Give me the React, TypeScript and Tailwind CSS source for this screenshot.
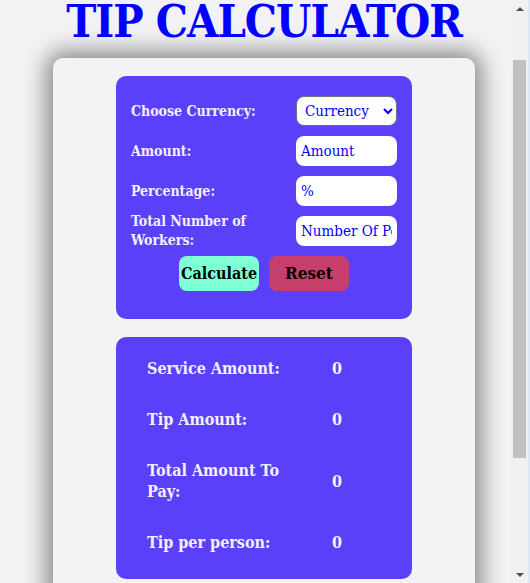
export default function App() {
  const rows = [
    { label: 'Service Amount:', value: '0' },
    { label: 'Tip Amount:', value: '0' },
    { label: 'Total Amount To Pay:', value: '0' },
    { label: 'Tip per person:', value: '0' },
  ];

  return (
    <div className="relative h-[583px] overflow-hidden bg-[#f2f2f4] font-['DejaVu_Serif_Condensed','DejaVu_Serif',serif]">
      <div className="w-[528px] pb-10">
        <h1 className="text-center text-[45px] font-bold leading-[44px] tracking-[-1px] text-[#0000ff]">
          TIP CALCULATOR
        </h1>

        <div className="mx-auto mt-[14px] w-[422px] rounded-[10px] bg-[#f3f3f5] pt-[18px] pb-6 shadow-[0_0_22px_6px_rgba(0,0,0,0.45)]">
          <div className="mx-auto w-[296px] rounded-[10px] bg-[#5b40f9] px-[15px] pt-5 pb-7">
            <div className="flex flex-col gap-[10px]">
              <div className="flex h-[30px] items-center justify-between">
                <label className="text-[14px] font-bold text-[#f2f0ff]">Choose Currency:</label>
                <select className="h-[30px] w-[101px] rounded-[8px] border border-gray-500 bg-white px-1 text-[15px] text-[#0000ff]">
                  <option>Currency</option>
                </select>
              </div>
              <div className="flex h-[30px] items-center justify-between">
                <label className="text-[14px] font-bold text-[#f2f0ff]">Amount:</label>
                <input placeholder="Amount" className="h-[30px] w-[101px] rounded-[8px] bg-white px-[5px] text-[15px] placeholder:text-[#0000ff] outline-none" />
              </div>
              <div className="flex h-[30px] items-center justify-between">
                <label className="text-[14px] font-bold text-[#f2f0ff]">Percentage:</label>
                <input placeholder="%" className="h-[30px] w-[101px] rounded-[8px] bg-white px-[5px] text-[15px] placeholder:text-[#0000ff] outline-none" />
              </div>
              <div className="flex h-[30px] items-center justify-between">
                <label className="w-[140px] text-[14px] font-bold leading-[19px] text-[#f2f0ff]">
                  Total Number of Workers:
                </label>
                <input placeholder="Number Of People" className="h-[30px] w-[101px] rounded-[8px] bg-white px-[5px] text-[15px] placeholder:text-[#0000ff] outline-none" />
              </div>
            </div>
            <div className="mt-[10px] flex justify-center gap-[10px]">
              <button className="h-[35px] w-[80px] rounded-[8px] bg-[#7fffd4] text-[16px] font-bold text-black">
                Calculate
              </button>
              <button className="h-[35px] w-[80px] rounded-[8px] bg-[#c63e6c] text-[17px] font-bold text-black">
                Reset
              </button>
            </div>
          </div>

          <div className="mx-auto mt-[18px] w-[296px] rounded-[10px] bg-[#5b40f9] px-[31px] pt-[6px] pb-[11px]">
            <table className="w-full text-[16px] font-bold text-[#f2f0ff]">
              <tbody>
                {rows.map((r) => (
                  <tr key={r.label}>
                    <td className="w-[185px] py-[15px] pr-[35px] leading-[21px]">{r.label}</td>
                    <td className="py-[15px] leading-[21px]">{r.value}</td>
                  </tr>
                ))}
              </tbody>
            </table>
          </div>
        </div>
      </div>

      {/* browser scrollbar */}
      <div aria-hidden className="absolute top-0 right-[2px] flex h-full w-[17px] flex-col items-center bg-[#f1f1f1]">
        <div className="flex h-[17px] w-full items-center justify-center">
          <div className="h-0 w-0 border-x-[4px] border-b-[4px] border-x-transparent border-b-[#505050]" />
        </div>
        <div className="mt-[43px] h-[398px] w-[13px] bg-[#c1c1c1]" />
        <div className="flex-1" />
        <div className="flex h-[17px] w-full items-center justify-center">
          <div className="h-0 w-0 border-x-[4px] border-t-[4px] border-x-transparent border-t-[#505050]" />
        </div>
      </div>
      <div aria-hidden className="absolute top-0 right-0 h-full w-[2px] bg-[#dfe8f6]" />
    </div>
  );
}
